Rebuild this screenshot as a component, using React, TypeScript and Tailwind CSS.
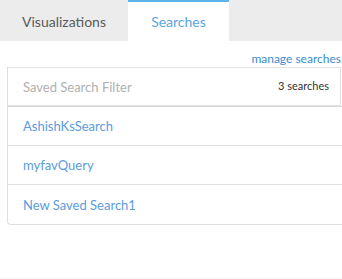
import "react";

const searches = ["AshishKsSearch", "myfavQuery", "New Saved Search1"];

export default function App() {
	return (
		<div
			className="w-[342px] h-[279px] bg-white overflow-hidden relative"
			style={{ fontFamily: "Lato, 'Open Sans', sans-serif" }}
		>
			{/* tab strip */}
			<div className="flex h-[41px] bg-[#ebeceb]">
				<div className="w-[128px] flex items-center justify-center pt-[1px] text-[14px] text-[#5a5a5a]">
					Visualizations
				</div>
				<div className="w-[101px] bg-white border-t-2 border-[#5db4ea] flex items-center justify-center text-[14px] text-[#5aa6e0]">
					Searches
				</div>
			</div>

			<div className="pl-[7px]">
				<div className="flex justify-end h-[26px] items-end pb-[2px]">
					<a className="text-[12px] text-[#3a8dcf] leading-none pr-[1px]">
						manage searches
					</a>
				</div>

				<div className="w-[360px] border-l border-b border-[#dedede] rounded-bl-[4px]">
					<div className="w-[333px] h-[39px] border-t border-r border-b border-[#e2e2e2] flex items-center justify-between pl-[15px] pr-[11px] pt-[2px]">
						<span className="text-[13px] text-[#b0b0b0]">
							Saved Search Filter
						</span>
						<span className="text-[11px] text-[#333] pb-[2px]">3 searches</span>
					</div>
					<div className="border-t border-[#d8d8d8]">
						{searches.map((name, i) => (
							<div
								key={name}
								className={`h-[39px] flex items-center pl-[15px] pt-[2px] text-[13px] text-[#5b9be0] ${
									i < searches.length - 1 ? "border-b border-[#e0e0e0]" : ""
								}`}
							>
								{name}
							</div>
						))}
					</div>
				</div>
			</div>

			<div className="absolute left-0 right-0 bottom-0 h-px bg-[#f6f6f6]" />
		</div>
	);
}
